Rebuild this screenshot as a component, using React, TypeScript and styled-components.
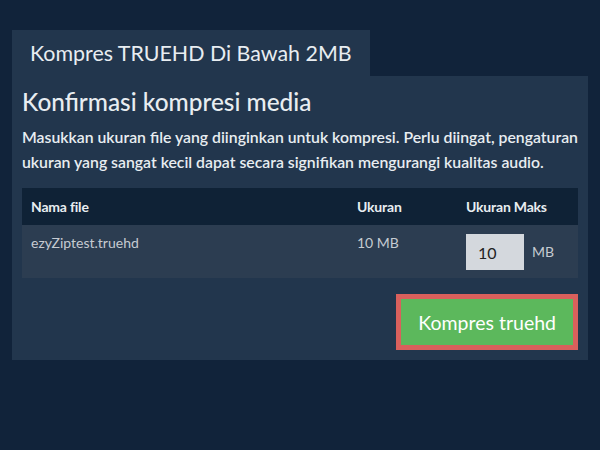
import React from 'react'
import styled, { createGlobalStyle } from 'styled-components'

const COLORS = {
  page: '#11233a',
  panel: '#22364d',
  head: '#0f2236',
  row: '#2c3d51',
  text: '#e8edf1',
  muted: '#c6cbd1',
  green: '#5cb85c',
  red: '#d9605c',
}

const GlobalStyle = createGlobalStyle`
  body {
    margin: 0;
    background: ${COLORS.page};
    font-family: Lato, 'Open Sans', sans-serif;
    color: ${COLORS.text};
  }
`

const Page = styled.div`
  padding: 30px 12px 0;
  width: 576px;
`

const Tab = styled.div`
  display: inline-block;
  height: 46px;
  line-height: 46px;
  padding: 0 18px;
  background: ${COLORS.panel};
  font-size: 21.4px;
  font-weight: 400;
`

const Panel = styled.div`
  background: ${COLORS.panel};
  padding: 12px 10px 10px;
  display: flex;
  flex-direction: column;
`

const Heading = styled.h2`
  margin: 0;
  font-family: 'Lato Medium', Lato, sans-serif;
  font-size: 24.4px;
  line-height: 28px;
  font-weight: normal;
`

const Intro = styled.p`
  margin: 8px -6px 14px 0;
  font-family: 'Lato Semibold', Lato, sans-serif;
  font-size: 15.8px;
  line-height: 25px;
  font-weight: normal;
`

const Table = styled.div`
  display: grid;
  grid-template-columns: 1fr 109px 121px;
`

const HeadCell = styled.div`
  background: ${COLORS.head};
  height: 37px;
  line-height: 37px;
  padding: 0 9px;
  font-size: 14px;
  font-weight: 700;
  letter-spacing: -0.2px;
`

const Cell = styled.div`
  background: ${COLORS.row};
  padding: 8px 9px 8px;
  min-height: 37px;
  font-size: 14px;
  line-height: 20px;
  color: ${COLORS.muted};
`

const SizeField = styled.div`
  display: flex;
  align-items: center;
  gap: 8px;
  margin-top: 1px;
`

const SizeInput = styled.input`
  width: 58px;
  height: 36px;
  box-sizing: border-box;
  border: none;
  outline: none;
  padding: 0 0 0 12px;
  background: #d4d8dd;
  color: #222;
  font-family: Lato, sans-serif;
  font-size: 16px;
`

const Unit = styled.span`
  font-size: 14px;
  color: ${COLORS.muted};
`

const Actions = styled.div`
  display: flex;
  justify-content: flex-end;
  margin-top: 16px;
`

const CompressButton = styled.button`
  height: 56px;
  box-sizing: border-box;
  padding: 0 17px;
  border: 5px solid ${COLORS.red};
  background: ${COLORS.green};
  color: #fff;
  font-family: Lato, sans-serif;
  font-size: 19.5px;
  font-weight: 400;
  cursor: pointer;
`

export default function App() {
  return (
    <Page>
      <GlobalStyle />
      <Tab>Kompres TRUEHD Di Bawah 2MB</Tab>
      <Panel>
        <Heading>Konfirmasi kompresi media</Heading>
        <Intro>
          Masukkan ukuran file yang diinginkan untuk kompresi. Perlu diingat, pengaturan
          ukuran yang sangat kecil dapat secara signifikan mengurangi kualitas audio.
        </Intro>
        <Table>
          <HeadCell>Nama file</HeadCell>
          <HeadCell>Ukuran</HeadCell>
          <HeadCell>Ukuran Maks</HeadCell>
          <Cell>ezyZiptest.truehd</Cell>
          <Cell>10 MB</Cell>
          <Cell>
            <SizeField>
              <SizeInput defaultValue="10" />
              <Unit>MB</Unit>
            </SizeField>
          </Cell>
        </Table>
        <Actions>
          <CompressButton>Kompres truehd</CompressButton>
        </Actions>
      </Panel>
    </Page>
  )
}
